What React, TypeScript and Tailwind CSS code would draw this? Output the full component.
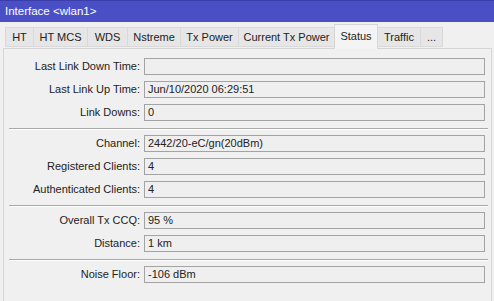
import React from 'react';

type Row = { label: string; value: string };

const tabs: { name: string; w: string }[] = [
  { name: 'HT', w: 'w-[29px]' },
  { name: 'HT MCS', w: 'w-[55px]' },
  { name: 'WDS', w: 'w-[41px]' },
  { name: 'Nstreme', w: 'w-[54px]' },
  { name: 'Tx Power', w: 'w-[59px]' },
  { name: 'Current Tx Power', w: 'w-[97px]' },
  { name: 'Status', w: 'w-[44px]' },
  { name: 'Traffic', w: 'w-[44px]' },
  { name: '...', w: 'w-[23px]' },
];

const groups: Row[][] = [
  [
    { label: 'Last Link Down Time', value: '' },
    { label: 'Last Link Up Time', value: 'Jun/10/2020 06:29:51' },
    { label: 'Link Downs', value: '0' },
  ],
  [
    { label: 'Channel', value: '2442/20-eC/gn(20dBm)' },
    { label: 'Registered Clients', value: '4' },
    { label: 'Authenticated Clients', value: '4' },
  ],
  [
    { label: 'Overall Tx CCQ', value: '95 %' },
    { label: 'Distance', value: '1 km' },
  ],
  [{ label: 'Noise Floor', value: '-106 dBm' }],
];

const Field: React.FC<Row> = ({ label, value }) => (
  <div className="flex items-center h-[17px]">
    <div className="w-[140px] shrink-0 text-right pr-[4px] text-[#222] whitespace-nowrap">{label}:</div>
    <div className="w-[341px] shrink-0 h-[17px] border border-[#a3a3a3] bg-[#efefef] pl-[3px] leading-[15px] text-[#222] whitespace-nowrap">
      {value}
    </div>
  </div>
);

export default function App() {
  return (
    <div
      className="w-[494px] h-[301px] bg-[#f0f0f0] overflow-hidden flex flex-col text-[11px]"
      style={{ fontFamily: '"Liberation Sans", Arial, sans-serif' }}
    >
      {/* title bar */}
      <div className="h-[22px] shrink-0 bg-[#4b4fc6] border-t border-[#3a3eaa] text-white text-[11.5px] pl-[5px] flex items-center">
        Interface &lt;wlan1&gt;
      </div>

      {/* tabs */}
      <div className="h-[26px] shrink-0 flex items-end pl-[5px] relative z-10">
        {tabs.map((t) => {
          const active = t.name === 'Status';
          return (
            <div
              key={t.name}
              className={
                (active
                  ? 'h-[25px] -mb-px bg-[#f4f4f4] border border-b-0 border-[#d6d6d6] items-start pt-[3px] -ml-px'
                  : 'h-[20px] mb-[1px] bg-[#e6e6e6] border border-[#d9d9d9] -ml-px first:ml-0 items-center') +
                ' ' +
                t.w +
                ' shrink-0 flex justify-center whitespace-nowrap text-[#222]'
              }
            >
              {t.name}
            </div>
          );
        })}
      </div>

      {/* panel */}
      <div className="flex-1 ml-[3px] mr-[2px] border border-b-0 border-[#d6d6d6] pt-[9px] flex flex-col">
        {groups.map((g, gi) => (
          <div key={gi} className="flex flex-col">
            {gi > 0 && (
              <div className="ml-[5px] mr-[3px] mt-[7px] mb-[5px] border-t border-[#a9a9a9] border-b border-b-white" />
            )}
            <div className="flex flex-col gap-[6px]">
              {g.map((r) => (
                <Field key={r.label} {...r} />
              ))}
            </div>
          </div>
        ))}
      </div>
    </div>
  );
}
